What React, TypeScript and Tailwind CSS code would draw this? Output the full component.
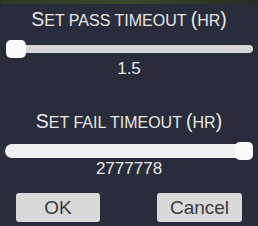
import { useState } from "react";

const font = { fontFamily: '"Liberation Sans", Arial, sans-serif' };

function SmallCapsTitle({ first, rest, unit }: { first: string; rest: string; unit: string }) {
  return (
    <div className="text-center leading-[22px] text-[#e6e6e6] text-[19.5px] whitespace-nowrap">
      {first}
      <span className="text-[16px]">{rest}</span>(
      <span className="text-[16px]">{unit}</span>)
    </div>
  );
}

interface SliderProps {
  value: number;
  max: number;
  track: string;
  trackH: string;
  thumbW: string;
}

function Slider({ value, max, track, trackH, thumbW }: SliderProps) {
  const pct = (value / max) * 100;
  return (
    <div className="relative h-[18px] mx-[5px]">
      <div className={`absolute left-0 right-0 top-1/2 -translate-y-1/2 rounded-full ${track} ${trackH}`} />
      <div
        className={`absolute top-0 h-[18px] ${thumbW} rounded-[5px] bg-[#fbfbfb]`}
        style={{ left: `calc(${pct}% - ${pct / 100} * 18px)` }}
      />
    </div>
  );
}

export default function App() {
  const [pass] = useState(1.5);
  const [fail] = useState(2777778);

  return (
    <div className="w-[258px] h-[226px] bg-[#1c2118] flex flex-col" style={font}>
      <div className="h-[4px] bg-gradient-to-r from-[#2d3a24] via-[#3a4a2c] to-[#262c22]" />
      <div className="flex-1 bg-[#292d3b] rounded-tl-[4px] pt-[4px]">
        <SmallCapsTitle first="S" rest="ET PASS TIMEOUT " unit="HR" />
        <div className="mt-[8px] pl-[1px]">
          <Slider value={0} max={1} track="bg-[#d6d6d6]" trackH="h-[8px]" thumbW="w-[20px]" />
        </div>
        <div className="mt-[2px] text-center text-[17px] leading-[18px] text-[#e6e6e6]">{pass}</div>

        <div className="mt-[32px]">
          <SmallCapsTitle first="S" rest="ET FAIL TIMEOUT " unit="HR" />
        </div>
        <div className="mt-[8px]">
          <Slider value={1} max={1} track="bg-[#f0f0f0]" trackH="h-[14px]" thumbW="w-[18px]" />
        </div>
        <div className="text-center text-[17px] leading-[18px] text-[#e6e6e6]">{fail}</div>

        <div className="mt-[15px] flex justify-between px-[16px]">
          <button className="w-[84px] h-[29px] rounded-[3px] bg-[#d9d9d9] text-[#3a3a3a] text-[19px] leading-none">
            OK
          </button>
          <button className="w-[85px] h-[29px] rounded-[3px] bg-[#d9d9d9] text-[#3a3a3a] text-[19px] leading-none">
            Cancel
          </button>
        </div>
      </div>
    </div>
  );
}
